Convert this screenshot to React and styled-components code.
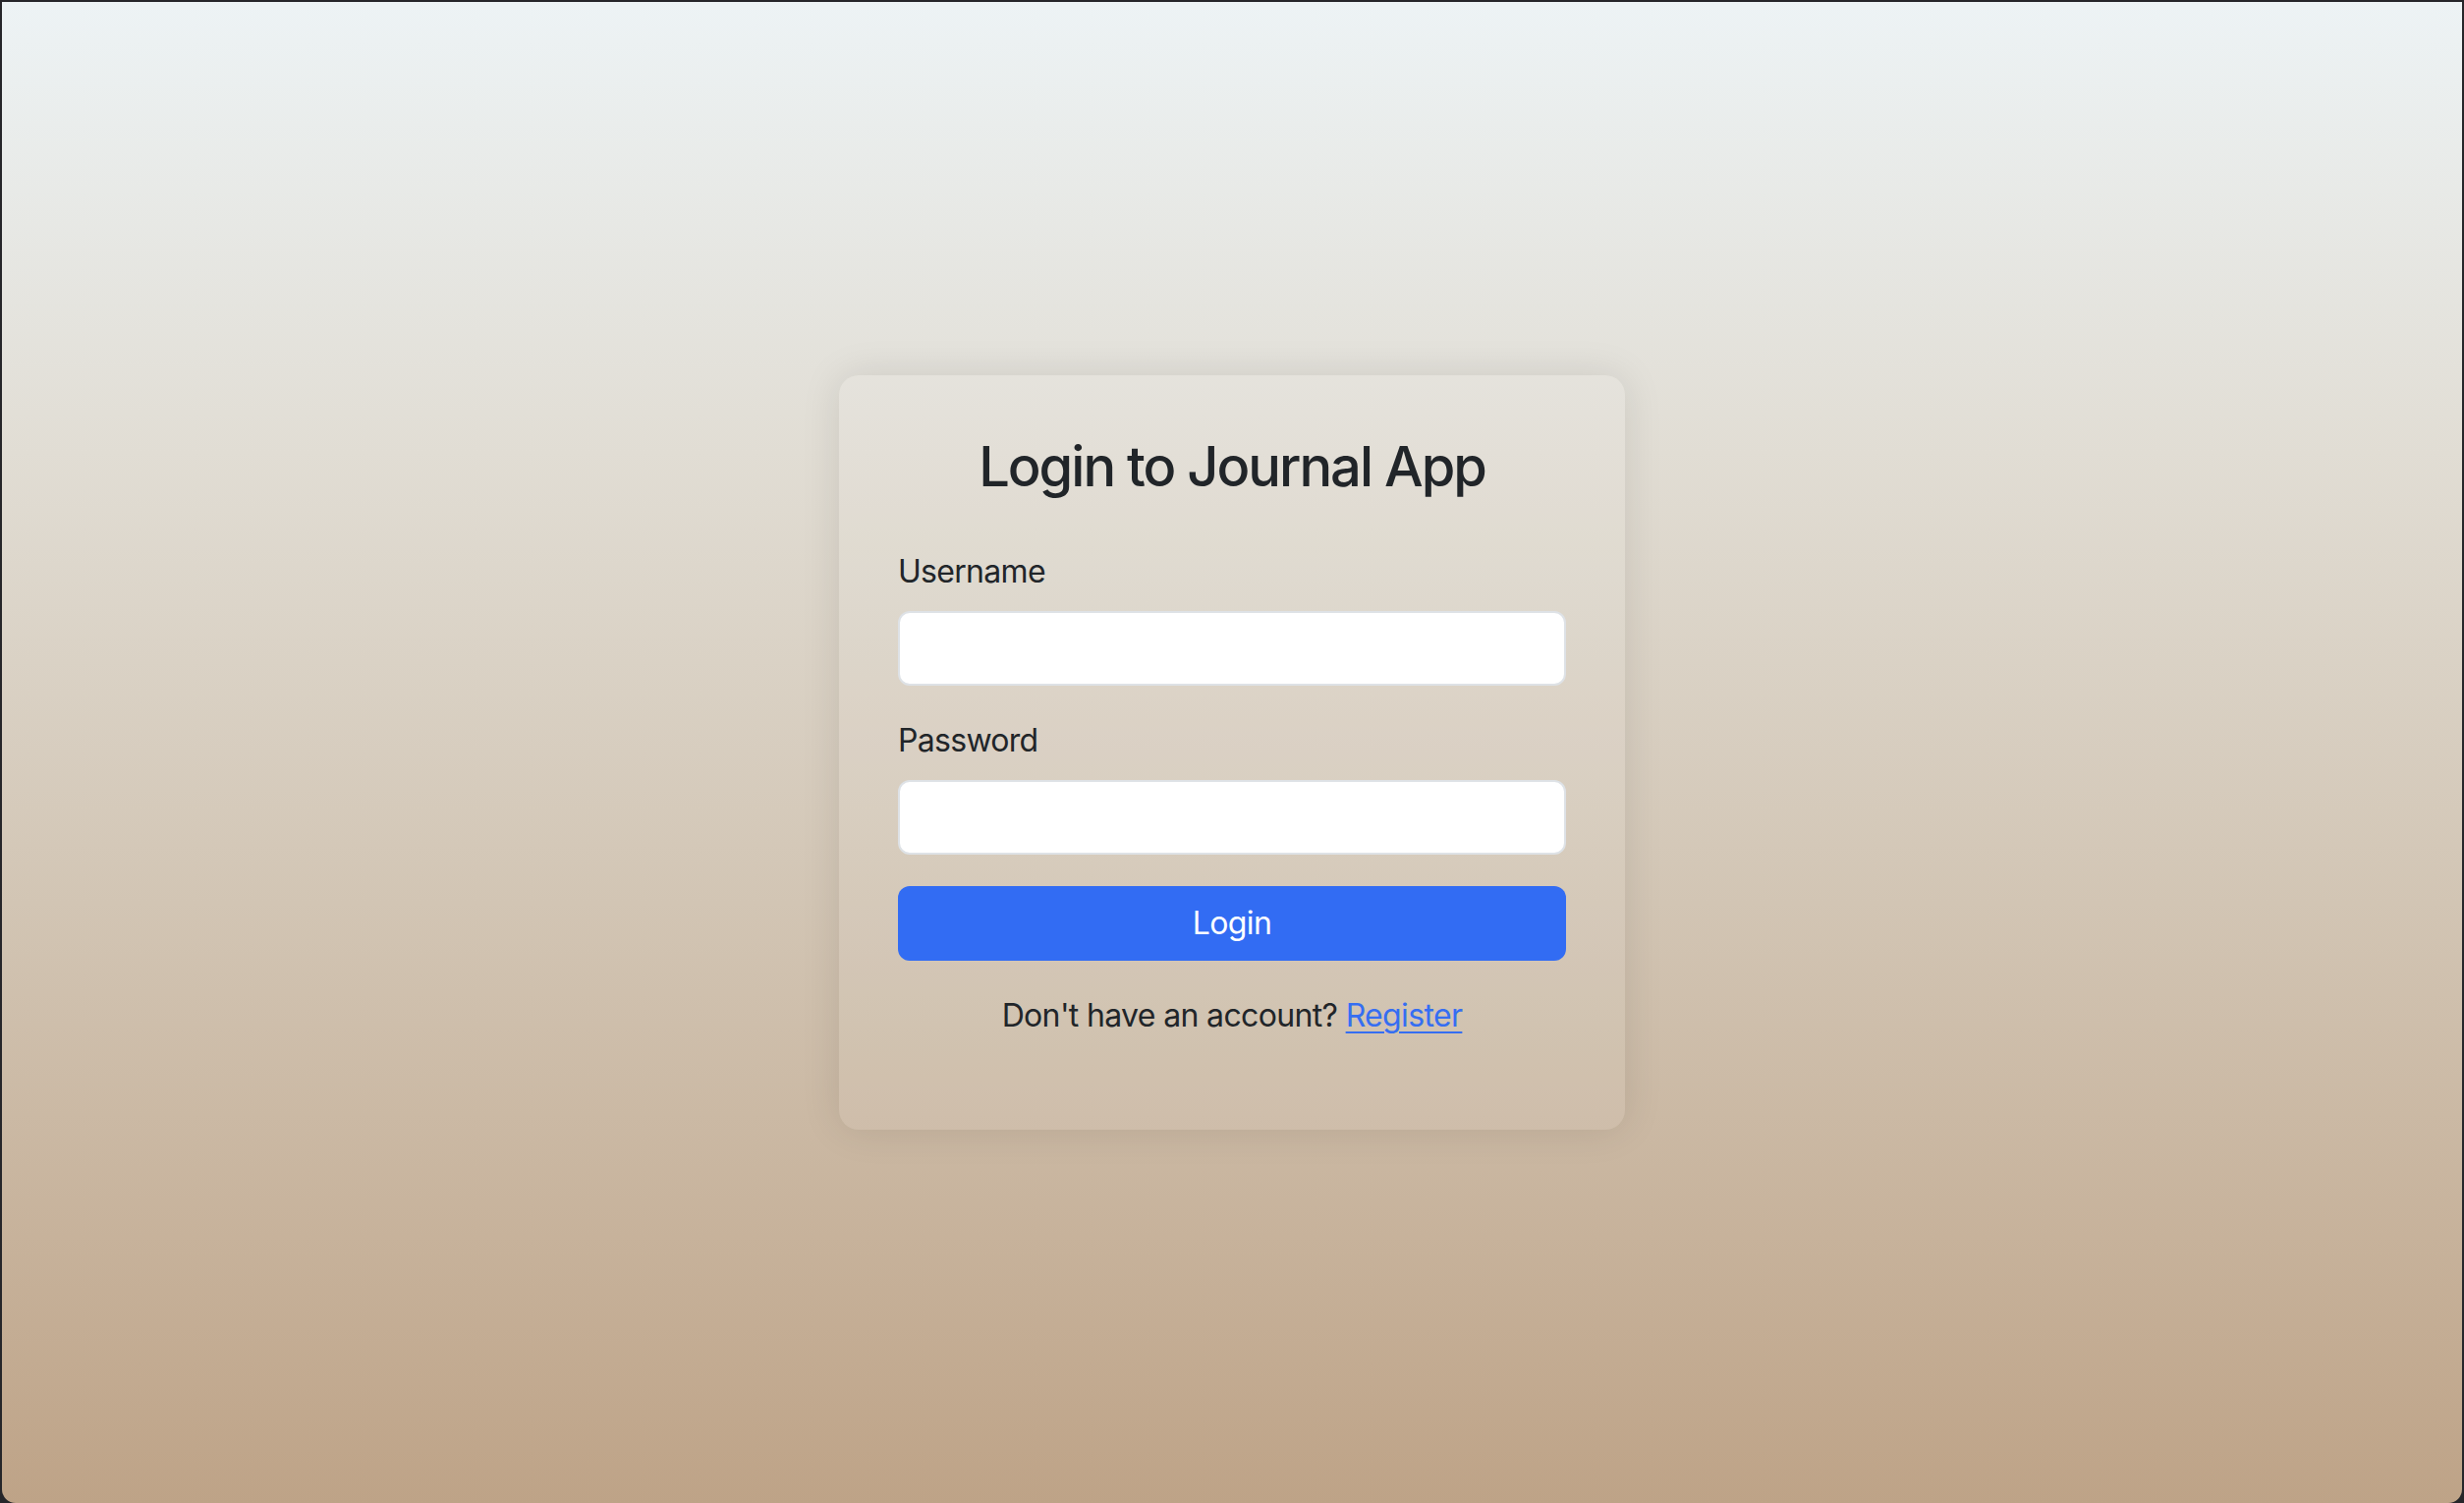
import React from "react";
import styled, { createGlobalStyle } from "styled-components";

const GlobalStyle = createGlobalStyle`
  html, body {
    margin: 0;
    padding: 0;
    background: #26262a;
  }
  * { box-sizing: border-box; }
  body {
    font-family: Inter, "Noto Sans", "Liberation Sans", sans-serif;
    color: #212529;
  }
`;

const Page = styled.div`
  margin: 2px 2px 0 2px;
  height: calc(100vh - 2px);
  border-radius: 0 0 14px 14px;
  background: linear-gradient(to bottom, #edf3f5 0%, #e1ddd4 30%, #d2c5b4 60%, #bea387 100%);
  display: flex;
  align-items: center;
  justify-content: center;
  overflow: hidden;
`;

const Card = styled.div`
  width: 800px;
  padding: 60px;
  border-radius: 20px;
  background: rgba(255, 255, 255, 0.08);
  box-shadow: 0 0 40px rgba(0, 0, 0, 0.1);
`;

const Title = styled.h3`
  margin: 0 0 48px;
  font-size: 56px;
  font-weight: 500;
  line-height: 1.2;
  text-align: center;
  letter-spacing: -2px;
  color: #212529;
`;

const Field = styled.div`
  margin-bottom: 32px;
`;

const Label = styled.label`
  display: block;
  margin-bottom: 16px;
  font-size: 32px;
  line-height: 48px;
  letter-spacing: -0.7px;
  color: #212529;
`;

const Input = styled.input`
  display: block;
  width: 100%;
  height: 76px;
  padding: 12px 24px;
  font-size: 32px;
  font-family: inherit;
  background: #ffffff;
  border: 2px solid #dee2e6;
  border-radius: 12px;
  outline: none;
`;

const Button = styled.button`
  display: block;
  width: 100%;
  height: 76px;
  border: none;
  border-radius: 12px;
  background: #326cf3;
  color: #ffffff;
  font-family: inherit;
  font-size: 32px;
  line-height: 48px;
  letter-spacing: -0.6px;
  cursor: pointer;
`;

const Footer = styled.p`
  margin: 32px 0 32px;
  font-size: 32px;
  line-height: 48px;
  text-align: center;
  letter-spacing: -0.65px;
  color: #212529;
`;

const Link = styled.a`
  color: #356ef2;
  text-decoration: underline;
  text-decoration-thickness: 2px;
  text-underline-offset: 5px;
`;

export default function App() {
  return (
    <>
      <GlobalStyle />
      <Page>
        <Card>
          <Title>Login to Journal App</Title>
          <form onSubmit={(e) => e.preventDefault()}>
            <Field>
              <Label htmlFor="username">Username</Label>
              <Input id="username" type="text" />
            </Field>
            <Field>
              <Label htmlFor="password">Password</Label>
              <Input id="password" type="password" />
            </Field>
            <Button type="submit">Login</Button>
          </form>
          <Footer>
            Don't have an account? <Link href="#">Register</Link>
          </Footer>
        </Card>
      </Page>
    </>
  );
}
